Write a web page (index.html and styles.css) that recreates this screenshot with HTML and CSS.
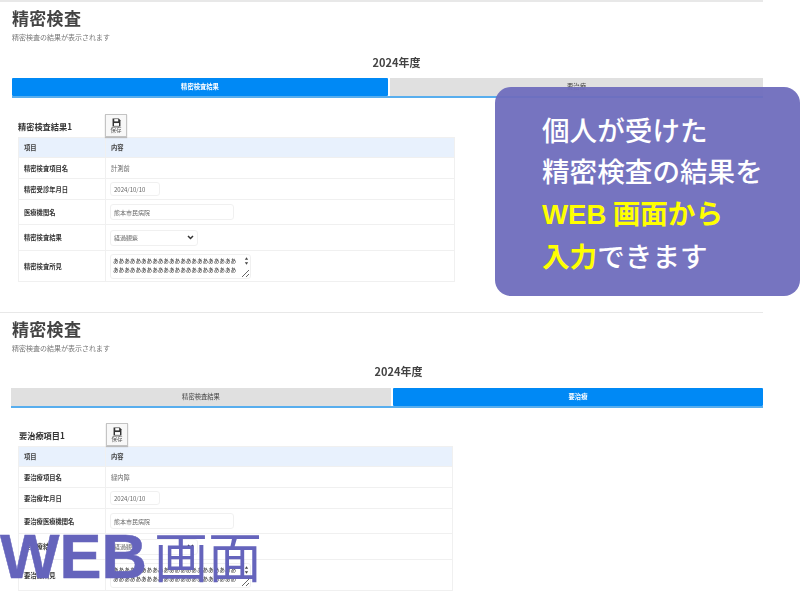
FILE: index.html
```html
<!DOCTYPE html>
<html lang="ja">
<head>
    <meta charset="utf-8">
    <title>精密検査</title>
    <link rel="stylesheet" href="styles.css">
</head>
<body>
    <section class="screen screen-first">
        <h1>精密検査</h1>
        <p class="sub">精密検査の結果が表示されます</p>
        <div class="year">2024年度</div>
        <div class="tabs">
            <div class="tab active">精密検査結果</div>
            <div class="tab">要治療</div>
        </div>
        <div class="record-head">
            <h2>精密検査結果1</h2>
            <button class="save">
                <svg viewBox="0 0 16 16" width="9" height="9"><path d="M1 1h11l3 3v11H1z" fill="#333"/><path d="M4 2h7v4H4z" fill="#fff"/><path d="M3.500 9h9v5h-9z" fill="#fff"/></svg>
                保存
            </button>
        </div>
        <table class="record">
            <tr class="head"><th>項目</th><td>内容</td></tr>
            <tr class="r1"><th>精密検査項目名</th><td>計測前</td></tr>
            <tr class="r2"><th>精密受診年月日</th><td><input class="date" value="2024/10/10"></td></tr>
            <tr class="r3"><th>医療機関名</th><td><input class="name" value="熊本市民病院"></td></tr>
            <tr class="r4"><th>精密検査結果</th><td><select><option>経過観察</option></select></td></tr>
            <tr class="r5">
                <th>精密検査所見</th>
                <td>
                    <div class="memo">
                        <textarea rows="2">ああああああああああああああああああああああああああああああああああああああああああああ</textarea>
                        <svg class="spin" viewBox="0 0 6 9" width="5" height="8"><path d="M3 0l2 3H1zM3 9L1 6h4z" fill="#444"/></svg>
                    </div>
                </td>
            </tr>
        </table>
    </section>

    <section class="screen screen-second">
        <h1>精密検査</h1>
        <p class="sub">精密検査の結果が表示されます</p>
        <div class="year">2024年度</div>
        <div class="tabs">
            <div class="tab">精密検査結果</div>
            <div class="tab active">要治療</div>
        </div>
        <div class="record-head">
            <h2>要治療項目1</h2>
            <button class="save">
                <svg viewBox="0 0 16 16" width="9" height="9"><path d="M1 1h11l3 3v11H1z" fill="#333"/><path d="M4 2h7v4H4z" fill="#fff"/><path d="M3.500 9h9v5h-9z" fill="#fff"/></svg>
                保存
            </button>
        </div>
        <table class="record">
            <tr class="head"><th>項目</th><td>内容</td></tr>
            <tr class="r1"><th>要治療項目名</th><td>緑内障</td></tr>
            <tr class="r2"><th>要治療年月日</th><td><input class="date" value="2024/10/10"></td></tr>
            <tr class="r3"><th>要治療医療機関名</th><td><input class="name" value="熊本市民病院"></td></tr>
            <tr class="r4"><th>要治療結果</th><td><select><option>経過観察</option></select></td></tr>
            <tr class="r5">
                <th>要治療所見</th>
                <td>
                    <div class="memo">
                        <textarea rows="2">ああああああああああああああああああああああああああああああああああああああああああああ</textarea>
                        <svg class="spin" viewBox="0 0 6 9" width="5" height="8"><path d="M3 0l2 3H1zM3 9L1 6h4z" fill="#444"/></svg>
                    </div>
                </td>
            </tr>
        </table>
    </section>

    <aside class="callout">
        <p>個人が受けた</p>
        <p>精密検査の結果を</p>
        <p class="mark"><span class="latin">WEB</span> 画面から</p>
        <p><span class="mark">入力</span>できます</p>
    </aside>

    <div class="caption"><b>WEB</b>画面</div>
</body>
</html>
```

FILE: styles.css
```css
* {
    margin: 0;
    padding: 0;
    box-sizing: border-box;
}

html, body {
    width: 800px;
    height: 600px;
    overflow: hidden;
}

body {
    position: relative;
    background: #fff;
    color: #333;
    font-family: "Noto Sans CJK JP", "Noto Sans", sans-serif;
}

.screen {
    width: 763px;
    height: 312px;
    padding-left: 12px;
    border-top: 2px solid #e8e8e8;
    filter: blur(0.6px);
}

.screen-second {
    height: 288px;
    border-top-width: 1px;
}

h1 {
    margin-top: 4px;
    font-size: 17px;
    line-height: 24px;
    font-weight: 700;
    letter-spacing: 0.3px;
    color: #444;
}

.sub {
    margin-top: 2px;
    font-size: 7px;
    line-height: 10px;
    color: #777;
}

.year {
    margin-top: 12px;
    padding-left: 18px;
    text-align: center;
    font-size: 11px;
    line-height: 16px;
    font-weight: 700;
    color: #444;
}

.tabs {
    display: flex;
    gap: 2px;
    margin-top: 8px;
    border-bottom: 2px solid #58aeee;
}

.screen-second .year {
    margin-top: 10px;
    padding-left: 22px;
}

.screen-second .tabs {
    margin-left: -1px;
    margin-top: 9px;
}

.tab {
    flex: 1;
    height: 18px;
    background: #e0e0e0;
    color: #444;
    text-align: center;
    font-size: 6.300px;
    line-height: 18px;
}

.tab.active {
    background: #0089f5;
    color: #fff;
    font-weight: 700;
    border-radius: 1px;
}

.screen-first .tab:first-child {
    flex: 0 0 376px;
}

.screen-second .tab:first-child {
    flex: 0 0 380px;
}

.record-head {
    display: flex;
    align-items: flex-end;
    height: 39px;
    margin-left: 6px;
}

.screen-second .record-head {
    height: 38px;
    margin-left: 7px;
}

h2 {
    width: 87px;
    margin-bottom: 4px;
    font-size: 8.200px;
    line-height: 14px;
    font-weight: 700;
}

.save {
    display: flex;
    flex-direction: column;
    align-items: center;
    justify-content: center;
    width: 22px;
    height: 23px;
    background: #f8f8f8;
    border: 1px solid #c4c4c4;
    box-shadow: 0 1px 1px #bbb;
    font-family: inherit;
    font-size: 5.500px;
    line-height: 7px;
    color: #555;
}

.record {
    width: 437px;
    margin-left: 6px;
    border-collapse: collapse;
    font-size: 6.300px;
}

.screen-second .record {
    width: 435px;
    margin-left: 6px;
}

.record th, .record td {
    border: 1px solid #f0f0f0;
    padding: 0 0 0 5px;
    text-align: left;
}

.record th {
    width: 87px;
    font-weight: 700;
    color: #333;
    white-space: nowrap;
}

.record .head th, .record .head td {
    background: #e8f1fd;
    color: #444;
    font-weight: 700;
}

.record td {
    color: #666;
}

.head { height: 20px; }
.r1 { height: 21px; }
.r2 { height: 21px; }
.r3 { height: 25px; }
.r4 { height: 26px; }
.r5 { height: 31px; }

.record input, .record select, .record textarea {
    display: block;
    margin-left: -1px;
    background: #fff;
    border: 1px solid #f0f0f0;
    border-radius: 3px;
    outline: 0;
    font-family: inherit;
    font-size: 6px;
    color: #666;
}

.date {
    width: 50px;
    height: 14px;
    padding-left: 3px;
}

.name {
    width: 124px;
    height: 16px;
    padding-left: 3px;
}

.record select {
    appearance: none;
    width: 88px;
    height: 16px;
    padding-left: 3px;
    background: #fff url("data:image/svg+xml,%3Csvg xmlns='http://www.w3.org/2000/svg' width='7' height='5'%3E%3Cpath d='M1 1l2.500 2.500L6 1' fill='none' stroke='%23333' stroke-width='1.500'/%3E%3C/svg%3E") no-repeat right 3px center;
}

.memo {
    position: relative;
    width: 141px;
}

.record textarea {
    width: 141px;
    height: 25px;
    padding: 2px 13px 0 2px;
    font-size: 5.600px;
    line-height: 9px;
    color: #333;
    overflow: hidden;
}

.spin {
    position: absolute;
    right: 3px;
    top: 3px;
}

.callout {
    position: absolute;
    left: 495px;
    top: 87px;
    width: 305px;
    height: 209px;
    padding: 22px 0 0 47px;
    background: rgba(111, 109, 189, 0.95);
    border-radius: 16px;
    color: #fff;
    font-size: 27.600px;
    line-height: 41.300px;
    font-weight: 500;
    white-space: nowrap;
}

.mark {
    color: #ffff00;
    font-weight: 700;
}

.latin {
    font-family: "Liberation Sans", sans-serif;
}

.caption {
    position: absolute;
    left: 0;
    top: 515px;
    color: #6564bc;
    font-size: 54px;
    line-height: 80px;
    white-space: nowrap;
}

.caption b {
    font-family: "Liberation Sans", sans-serif;
    font-size: 63px;
    font-weight: 700;
    margin-right: 7px;
    -webkit-text-stroke: 0.5px #6564bc;
}
```
